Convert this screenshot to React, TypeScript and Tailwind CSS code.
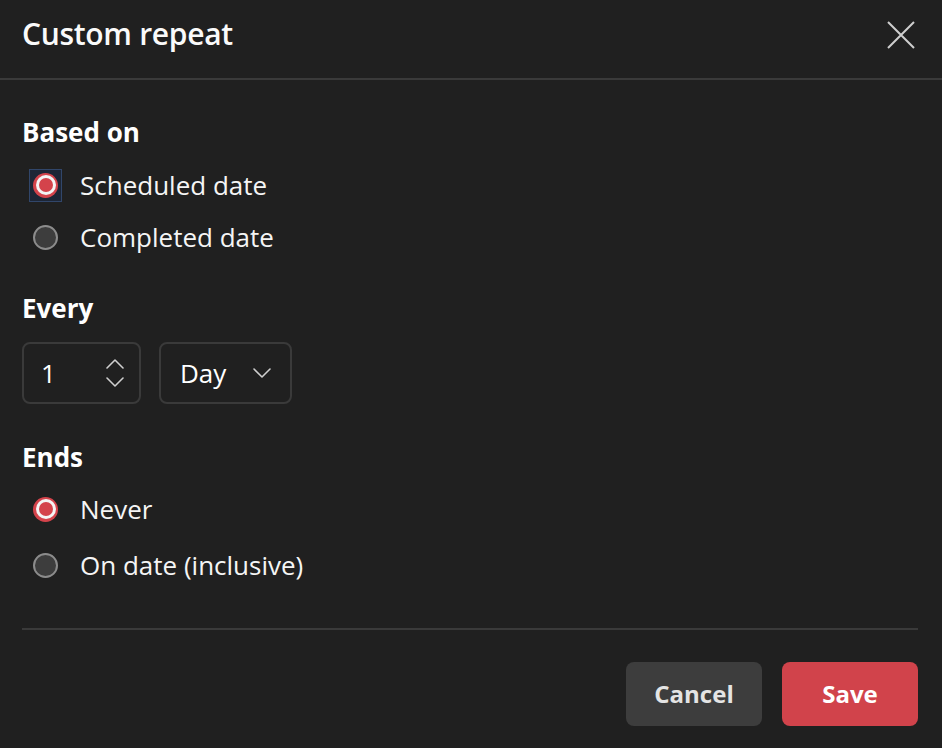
import { useState } from "react";

const font = { fontFamily: '"Open Sans", "Noto Sans", sans-serif' };

function Radio({ checked, focused }: { checked: boolean; focused?: boolean }) {
	const dot = checked ? (
		<div className="w-[25px] h-[25px] rounded-full bg-[#d4434b] flex items-center justify-center">
			<div className="w-[20px] h-[20px] rounded-full bg-[#f4f4f4] flex items-center justify-center">
				<div className="w-[14px] h-[14px] rounded-full bg-[#d4434b]" />
			</div>
		</div>
	) : (
		<div className="w-[25px] h-[25px] rounded-full bg-[#3d3d3d] border-2 border-[#8c8c8c]" />
	);
	return (
		<div
			className={`w-[33px] h-[33px] flex items-center justify-center border ${
				focused ? "border-[#31466a] bg-[#1d2636]" : "border-transparent"
			}`}
		>
			{dot}
		</div>
	);
}

function RadioRow({
	label,
	checked,
	focused,
	height,
	onClick,
}: {
	label: string;
	checked: boolean;
	focused?: boolean;
	height: string;
	onClick: () => void;
}) {
	return (
		<button
			type="button"
			onClick={onClick}
			className={`flex items-center w-full text-left ${height}`}
		>
			<div className="ml-[7px]">
				<Radio checked={checked} focused={focused} />
			</div>
			<span className="ml-[18px] text-[26px] text-[#f5f5f5]">{label}</span>
		</button>
	);
}

function Chevron({ up }: { up?: boolean }) {
	return (
		<svg width="18" height="10" viewBox="0 0 18 10" fill="none">
			<path
				d={up ? "M1 9 L9 1 L17 9" : "M1 1 L9 9 L17 1"}
				stroke="#cfcfcf"
				strokeWidth="1.6"
				strokeLinecap="round"
				strokeLinejoin="round"
			/>
		</svg>
	);
}

export default function App() {
	const [basedOn, setBasedOn] = useState("scheduled");
	const [ends, setEnds] = useState("never");

	return (
		<div className="w-[942px] h-[748px] bg-[#202020] text-white overflow-hidden" style={font}>
			<div className="h-[80px] flex items-center justify-between pl-[22px] pr-[26px] pb-[12px] border-b-2 border-[#3a3a3a]">
				<h1 className="text-[30px] font-semibold tracking-[-0.3px] text-[#fafafa]">Custom repeat</h1>
				<svg width="30" height="30" viewBox="0 0 30 30" fill="none" className="mt-[4px]">
					<path d="M2 2 L28 28 M28 2 L2 28" stroke="#cfcfcf" strokeWidth="2" />
				</svg>
			</div>

			<div className="pl-[22px] pr-[24px]">
				<div className="mt-[34px] h-[36px] flex items-center text-[26px] font-bold">Based on</div>
				<div className="mt-[9px]">
					<RadioRow
						label="Scheduled date"
						checked={basedOn === "scheduled"}
						focused
						height="h-[52px]"
						onClick={() => setBasedOn("scheduled")}
					/>
					<RadioRow
						label="Completed date"
						checked={basedOn === "completed"}
						height="h-[53px]"
						onClick={() => setBasedOn("completed")}
					/>
				</div>

				<div className="mt-[26px] h-[36px] flex items-center text-[26px] font-bold">Every</div>
				<div className="mt-[16px] flex gap-[18px]">
					<div className="w-[119px] h-[62px] rounded-[8px] border-2 border-[#3a3a3a] flex items-center justify-between pl-[17px] pr-[15px]">
						<span className="text-[26px]">1</span>
						<div className="flex flex-col gap-[8px]">
							<Chevron up />
							<Chevron />
						</div>
					</div>
					<div className="w-[133px] h-[62px] rounded-[8px] border-2 border-[#3a3a3a] flex items-center justify-between pl-[19px] pr-[19px]">
						<span className="text-[26px]">Day</span>
						<Chevron />
					</div>
				</div>

				<div className="mt-[35px] h-[36px] flex items-center text-[26px] font-bold">Ends</div>
				<div className="mt-[6px]">
					<RadioRow
						label="Never"
						checked={ends === "never"}
						height="h-[56px]"
						onClick={() => setEnds("never")}
					/>
					<RadioRow
						label="On date (inclusive)"
						checked={ends === "date"}
						height="h-[56px]"
						onClick={() => setEnds("date")}
					/>
				</div>

				<div className="mt-[35px] h-[2px] bg-[#3a3a3a]" />

				<div className="mt-[32px] flex justify-end gap-[20px]">
					<button className="w-[136px] h-[64px] rounded-[8px] bg-[#3d3d3d] text-[24px] font-bold text-[#e4e4e4]">
						Cancel
					</button>
					<button className="w-[136px] h-[64px] rounded-[8px] bg-[#d1434b] text-[24px] font-bold text-white">
						Save
					</button>
				</div>
			</div>
		</div>
	);
}
